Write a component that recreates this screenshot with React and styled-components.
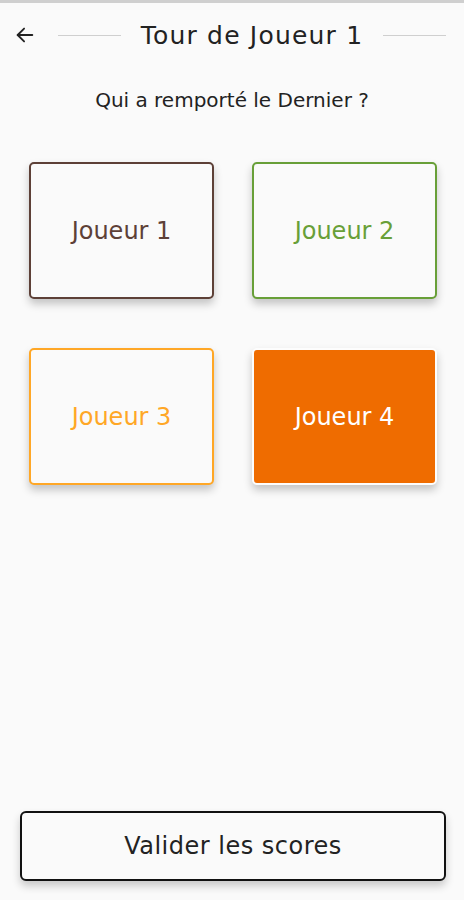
import React, { useState } from 'react';
import styled, { createGlobalStyle } from 'styled-components';

const GlobalStyle = createGlobalStyle`
    html, body {
        margin: 0;
        padding: 0;
        background: #fafafa;
    }
    * { box-sizing: border-box; }
`;

const Screen = styled.div`
    display: flex;
    flex-direction: column;
    height: 900px;
    background: #fafafa;
    border-top: 3px solid #cfcfcf;
    font-family: "DejaVu Sans", "Noto Sans", sans-serif;
    color: #222;
`;

const Header = styled.div`
    display: flex;
    align-items: center;
    height: 64px;
    padding: 0 18px 0 12px;
    gap: 20px;
`;

const BackButton = styled.button`
    display: flex;
    align-items: center;
    justify-content: center;
    width: 26px;
    height: 26px;
    padding: 0;
    border: none;
    background: none;
    color: #222;
    cursor: pointer;
`;

const Line = styled.div`
    flex: 1;
    height: 1px;
    background: #cfcfcf;
`;

const Title = styled.h1`
    margin: 0;
    font-size: 25px;
    font-weight: 400;
    letter-spacing: 1.2px;
    color: #222;
`;

const Question = styled.p`
    margin: 20px 0 0;
    line-height: 26px;
    text-align: center;
    font-size: 20px;
    color: #222;
`;

const Grid = styled.div`
    display: grid;
    grid-template-columns: 185px 185px;
    column-gap: 38px;
    row-gap: 49px;
    padding: 49px 0 0 29px;
`;

const Card = styled.button`
    display: flex;
    align-items: center;
    justify-content: center;
    height: 137px;
    border-radius: 5px;
    border: 2px solid ${({ selected, color }) => (selected ? '#fdfdfd' : color)};
    background: ${({ selected, color }) => (selected ? color : '#fafafa')};
    color: ${({ selected, color }) => (selected ? '#fff' : color)};
    font-family: inherit;
    font-size: 24px;
    box-shadow: 0 5px 8px rgba(0, 0, 0, 0.22);
    cursor: pointer;
`;

const Footer = styled.div`
    margin-top: auto;
    padding: 0 18px 19px 20px;
`;

const Submit = styled.button`
    width: 100%;
    height: 70px;
    border: 2px solid #111;
    border-radius: 6px;
    background: #fafafa;
    font-family: inherit;
    font-size: 24px;
    letter-spacing: 0.5px;
    color: #222;
    box-shadow: 0 5px 8px rgba(0, 0, 0, 0.2);
    cursor: pointer;
`;

const players = [
    { name: 'Joueur 1', color: '#5d4037' },
    { name: 'Joueur 2', color: '#689f38' },
    { name: 'Joueur 3', color: '#ffa726' },
    { name: 'Joueur 4', color: '#ef6c00' },
];

const App = () => {
    const [selected, setSelected] = useState(3);
    return (
        <>
            <GlobalStyle />
            <Screen>
                <Header>
                    <BackButton aria-label="Retour">
                        <svg width="22" height="22" viewBox="0 0 24 24" fill="none" stroke="currentColor" strokeWidth="2" strokeLinecap="round" strokeLinejoin="round">
                            <path d="M20 12H4" />
                            <path d="M11 5l-7 7 7 7" />
                        </svg>
                    </BackButton>
                    <Line />
                    <Title>Tour de Joueur 1</Title>
                    <Line />
                </Header>
                <Question>Qui a remporté le Dernier ?</Question>
                <Grid>
                    {players.map((p, i) => (
                        <Card key={p.name} color={p.color} selected={selected === i} onClick={() => setSelected(i)}>
                            {p.name}
                        </Card>
                    ))}
                </Grid>
                <Footer>
                    <Submit>Valider les scores</Submit>
                </Footer>
            </Screen>
        </>
    );
};

export default App;
